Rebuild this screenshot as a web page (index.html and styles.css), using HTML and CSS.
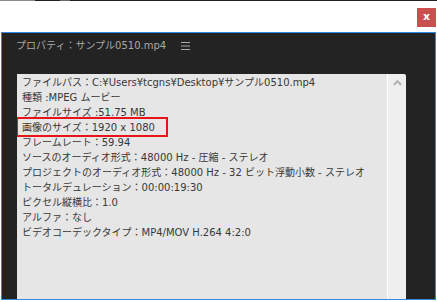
FILE: index.html
```html
<!DOCTYPE html>
<html lang="ja">
<head>
<meta charset="utf-8">
<link rel="stylesheet" href="styles.css">
</head>
<body>
<div class="topline"><span class="seg1"></span><span class="seg2"></span></div>
<div class="header">
  <div class="close">x</div>
</div>
<div class="panel">
  <div class="title">
    <span>プロパティ：サンプル0510.mp4</span>
    <svg class="menu" width="9" height="8" viewBox="0 0 9 8"><rect x="0" y="0" width="9" height="1" fill="#a9a9a9"/><rect x="0" y="3.5" width="9" height="1" fill="#a9a9a9"/><rect x="0" y="7" width="9" height="1" fill="#a9a9a9"/></svg>
  </div>
  <div class="box">
    <div class="info">
      <div class="line">ファイルパス：C:¥Users¥tcgns¥Desktop¥サンプル0510.mp4</div>
      <div class="line">種類 :MPEG ムービー</div>
      <div class="line">ファイルサイズ :51.75 MB</div>
      <div class="line"><span class="mark">画像のサイズ：1920 x 1080</span></div>
      <div class="line">フレームレート：59.94</div>
      <div class="line">ソースのオーディオ形式：48000 Hz - 圧縮 - ステレオ</div>
      <div class="line">プロジェクトのオーディオ形式：48000 Hz - 32 ビット浮動小数 - ステレオ</div>
      <div class="line">トータルデュレーション：00:00:19:30</div>
      <div class="line">ピクセル縦横比：1.0</div>
      <div class="line">アルファ：なし</div>
      <div class="line">ビデオコーデックタイプ：MP4/MOV H.264 4:2:0</div>
    </div>
    <div class="scroll">
      <svg width="9" height="7" viewBox="0 0 9 7"><polyline points="1,6 4.5,2 8,6" fill="none" stroke="#b3b3b3" stroke-width="2"/></svg>
    </div>
  </div>
</div>
</body>
</html>
```

FILE: styles.css
```css
html, body {
  margin: 0;
  padding: 0;
  background: #ffffff;
  width: 437px;
  height: 302px;
  overflow: hidden;
}
.topline {
  height: 1px;
  background: #1e1e1e;
  display: flex;
}
.seg1 {
  width: 35px;
  background: #8a8a8a;
}
.seg2 {
  width: 10px;
  margin-left: 25px;
  background: #6a6a6a;
}
.header {
  height: 31px;
  display: flex;
  justify-content: flex-end;
  align-items: flex-start;
  padding-right: 1px;
}
.close {
  margin-top: 7px;
  width: 19px;
  height: 19px;
  background: #c8514f;
  color: #ffffff;
  font-family: "DejaVu Sans", sans-serif;
  font-weight: bold;
  font-size: 11px;
  line-height: 18px;
  text-align: center;
}
.panel {
  margin-left: 1px;
  width: 433px;
  height: 266px;
  border: 1px solid #2f8ae6;
  background: #232323;
  display: flex;
  flex-direction: column;
}
.title {
  display: flex;
  align-items: center;
  padding: 5px 0 0 14px;
  height: 15px;
  color: #a9a9a9;
  font-family: "DejaVu Sans", "Noto Sans CJK JP", sans-serif;
  font-size: 10px;
  line-height: 15px;
}
.menu {
  margin-left: 15px;
}
.box {
  flex: 1;
  margin: 21px 29px 0 15px;
  display: flex;
  border-top-right-radius: 2px;
  overflow: hidden;
}
.info {
  flex: 1;
  background: #e6e6e6;
  padding: 1px 0 0 5px;
  color: #383838;
  font-family: "DejaVu Sans", "Noto Sans CJK JP", sans-serif;
  font-size: 10px;
  line-height: 15px;
  white-space: nowrap;
  border-right: 1px solid #ffffff;
}
.line {
  height: 15px;
}
.mark {
  position: relative;
  display: inline-block;
  line-height: 15px;
}
.mark::after {
  content: "";
  position: absolute;
  left: -6px;
  right: -13px;
  top: -3px;
  bottom: -2px;
  border: 2px solid #e8141a;
}
.scroll {
  width: 18px;
  background: #efefef;
  display: flex;
  justify-content: center;
  padding-top: 5px;
  align-items: flex-start;
}
```
